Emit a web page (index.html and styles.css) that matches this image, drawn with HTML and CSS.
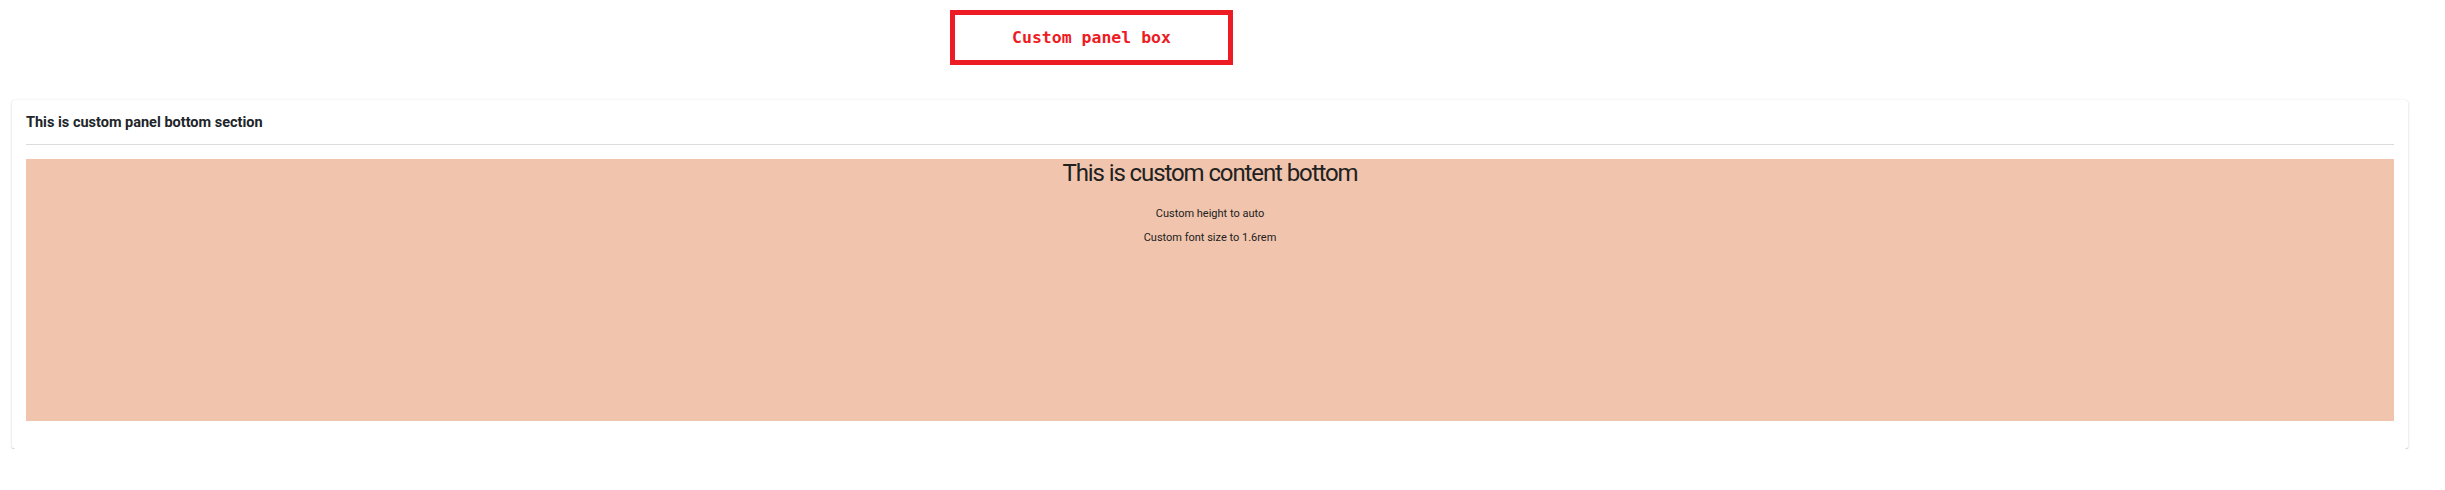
FILE: index.html
```html
<!DOCTYPE html>
<html>
<head>
<meta charset="utf-8">
<link rel="stylesheet" href="styles.css">
</head>
<body>
<div class="top">
  <div class="redbox">Custom panel box</div>
</div>
<div class="panel">
  <div class="panel-head">This is custom panel bottom section</div>
  <div class="content">
    <h2 class="content-title">This is custom content bottom</h2>
    <p class="content-text">Custom height to auto</p>
    <p class="content-text">Custom font size to 1.6rem</p>
  </div>
</div>
</body>
</html>
```

FILE: styles.css
```css
html, body {
  margin: 0;
  padding: 0;
  background: #ffffff;
  font-family: Roboto, "Liberation Sans", sans-serif;
}
.top {
  padding: 10px 0 0 950px;
  height: 100px;
  box-sizing: border-box;
}
.redbox {
  width: 283px;
  height: 55px;
  box-sizing: border-box;
  border: 5px solid #ed1c24;
  color: #ed1c24;
  font-family: "DejaVu Sans Mono", "Liberation Mono", monospace;
  font-weight: bold;
  font-size: 16.5px;
  display: flex;
  align-items: center;
  justify-content: center;
}
.panel {
  margin: 0 37px 0 12px;
  background: #fff;
  border-radius: 3px;
  box-shadow: 0 2px 1px -1px rgba(0,0,0,0.55), 0 1px 3px rgba(0,0,0,0.15), 0 0 1px rgba(0,0,0,0.15);
  padding: 14px 14px 28px 14px;
}
.panel-head {
  font-size: 14.5px;
  font-weight: bold;
  color: #212529;
  padding-bottom: 13px;
  border-bottom: 1px solid #dcdcdc;
  margin-bottom: 14px;
  line-height: 17px;
}
.content {
  background: #f1c5ad;
  height: 262px;
  text-align: center;
  color: #212121;
  overflow: hidden;
}
.content-title {
  margin: 0 0 20px 0;
  font-size: 24px;
  letter-spacing: -1.1px;
  font-weight: normal;
}
.content-text {
  margin: 11px 0;
  font-size: 11px;
}
```
